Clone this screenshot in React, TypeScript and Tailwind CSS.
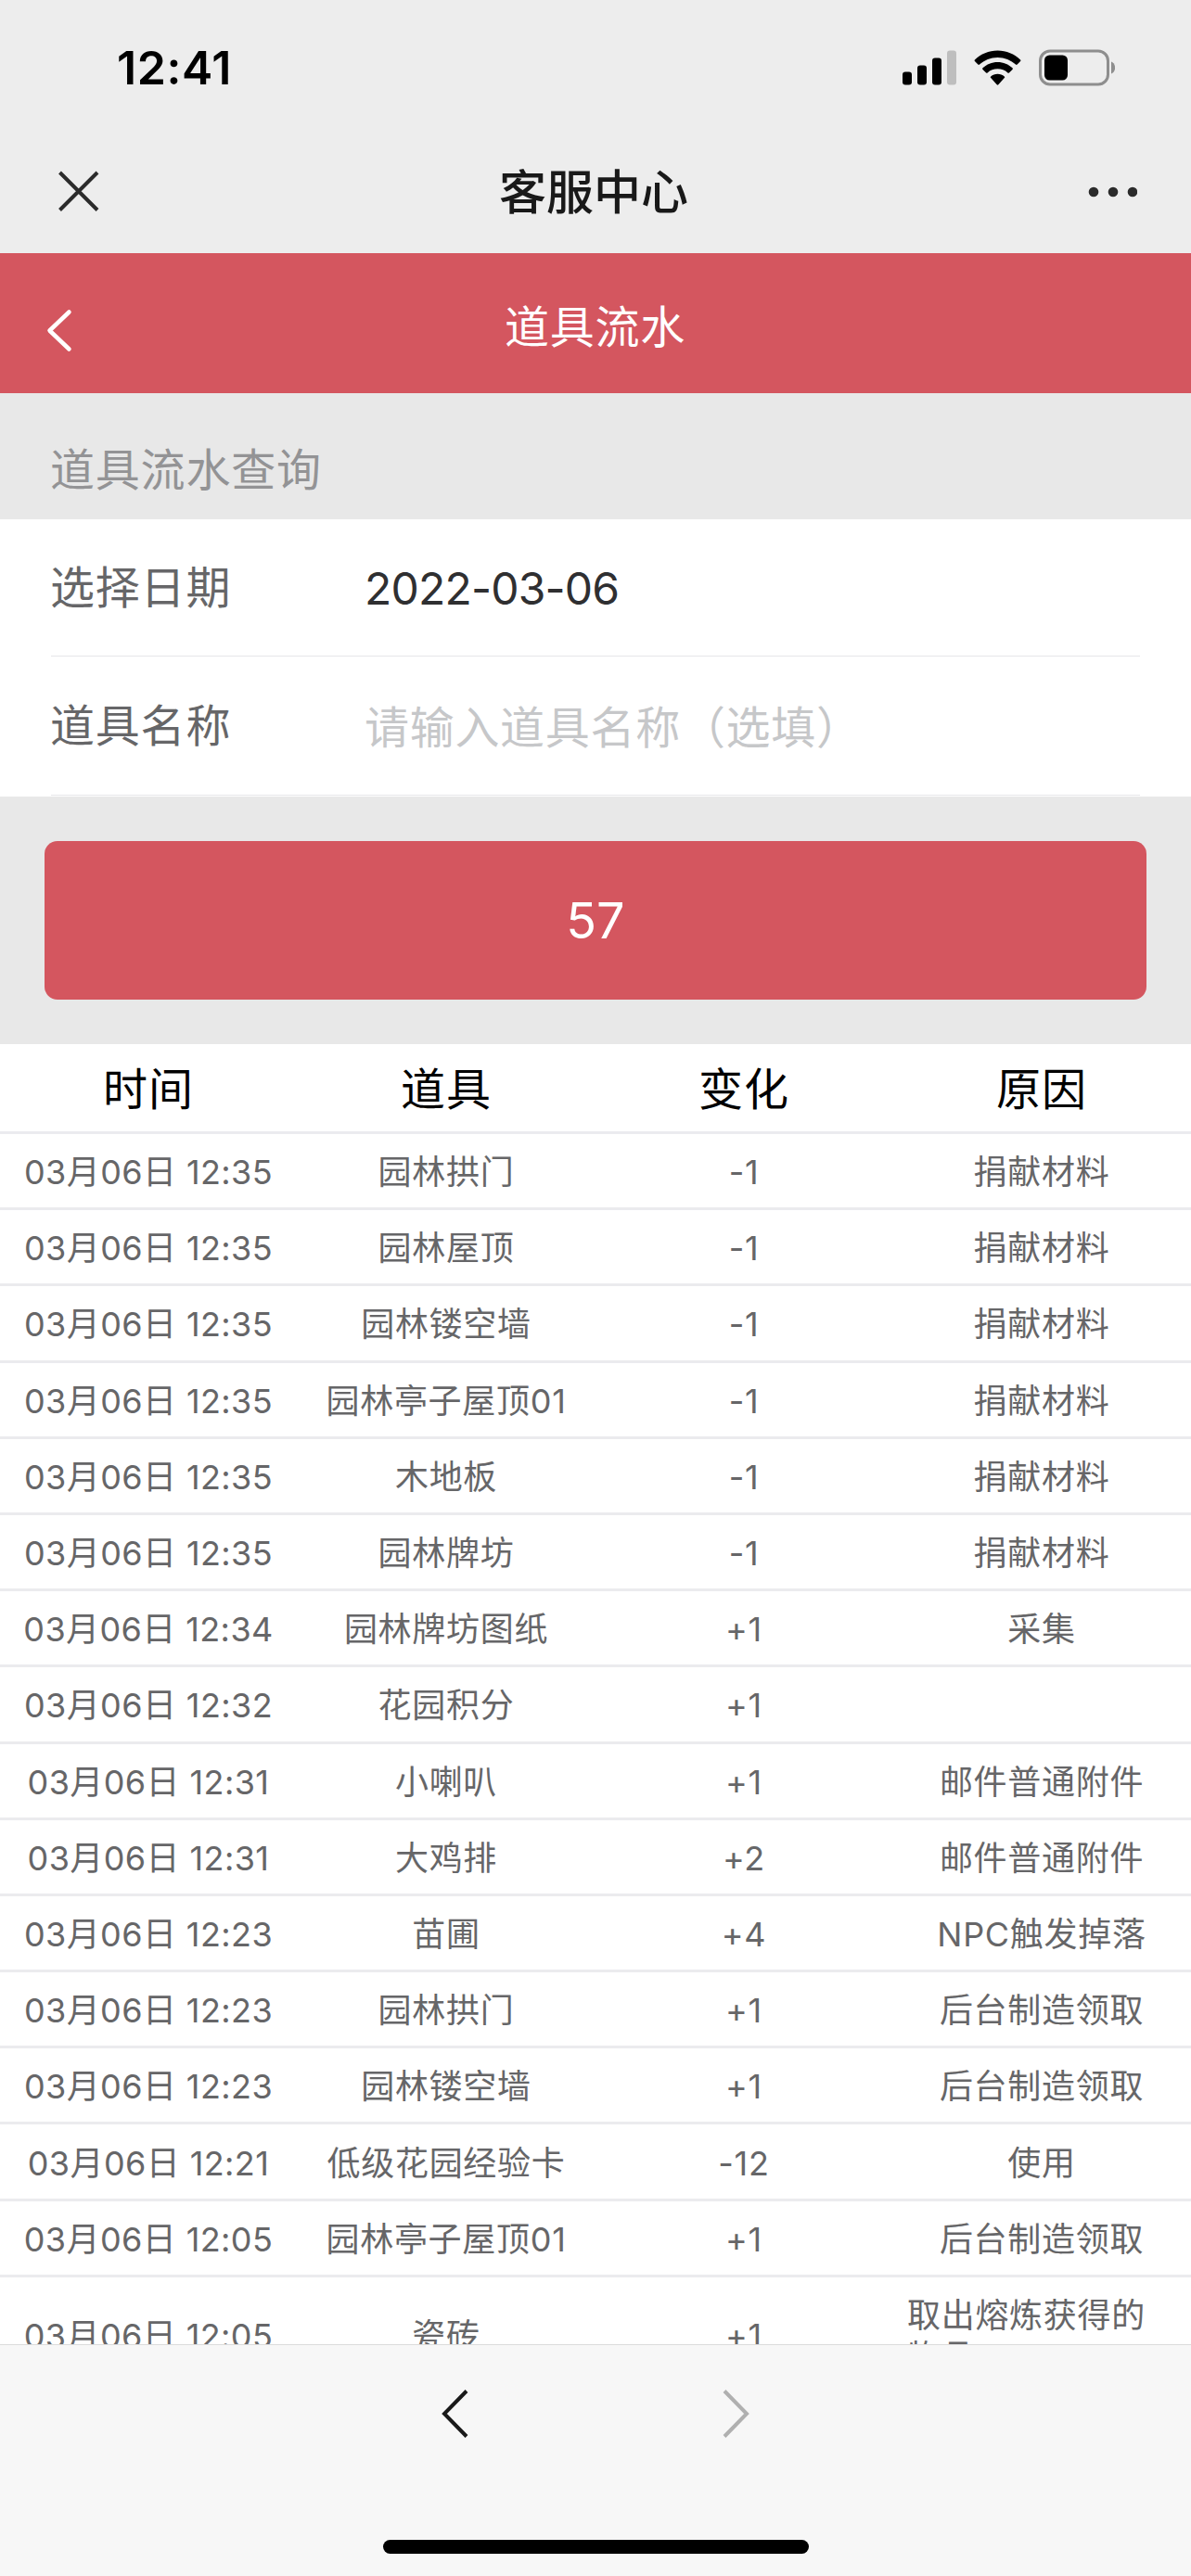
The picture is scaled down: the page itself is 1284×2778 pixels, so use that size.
import type { ReactNode } from 'react'

interface FlowRecord {
  time: string
  item: string
  change: string
  reason: string
}

const COLUMNS = ['时间', '道具', '变化', '原因']

const RECORDS: FlowRecord[] = [
  { time: '03月06日 12:35', item: '园林拱门', change: '-1', reason: '捐献材料' },
  { time: '03月06日 12:35', item: '园林屋顶', change: '-1', reason: '捐献材料' },
  { time: '03月06日 12:35', item: '园林镂空墙', change: '-1', reason: '捐献材料' },
  { time: '03月06日 12:35', item: '园林亭子屋顶01', change: '-1', reason: '捐献材料' },
  { time: '03月06日 12:35', item: '木地板', change: '-1', reason: '捐献材料' },
  { time: '03月06日 12:35', item: '园林牌坊', change: '-1', reason: '捐献材料' },
  { time: '03月06日 12:34', item: '园林牌坊图纸', change: '+1', reason: '采集' },
  { time: '03月06日 12:32', item: '花园积分', change: '+1', reason: '' },
  { time: '03月06日 12:31', item: '小喇叭', change: '+1', reason: '邮件普通附件' },
  { time: '03月06日 12:31', item: '大鸡排', change: '+2', reason: '邮件普通附件' },
  { time: '03月06日 12:23', item: '苗圃', change: '+4', reason: 'NPC触发掉落' },
  { time: '03月06日 12:23', item: '园林拱门', change: '+1', reason: '后台制造领取' },
  { time: '03月06日 12:23', item: '园林镂空墙', change: '+1', reason: '后台制造领取' },
  { time: '03月06日 12:21', item: '低级花园经验卡', change: '-12', reason: '使用' },
  { time: '03月06日 12:05', item: '园林亭子屋顶01', change: '+1', reason: '后台制造领取' },
  { time: '03月06日 12:05', item: '瓷砖', change: '+1', reason: '取出熔炼获得的物品' },
]

// ── Status bar ────────────────────────────────────────────────────────────────

function StatusBar() {
  return (
    <div className="flex h-[146px] items-center justify-between pl-[126px] pr-[82px]">
      <span className="text-[50px] leading-none font-semibold tracking-[0.6px] text-black">12:41</span>
      <div className="flex items-center">
        <svg className="h-[38px] w-[58px]" viewBox="0 0 58 38">
          <rect x="0" y="23.5" width="10" height="14" rx="3" />
          <rect x="16" y="16.5" width="10" height="21" rx="3" />
          <rect x="32" y="8.5" width="10" height="29" rx="3" />
          <rect x="48" y="0.5" width="10" height="37" rx="3" fill="#bebebe" />
        </svg>
        <svg className="ml-[19px] h-[38px] w-[51px]" viewBox="0 0 51 38">
          <path d="M25.5 0.5C16 0.5 7.300 4.300 0.900 10.500a1.100 1.100 0 0 0 0 1.600l3.500 3.500a1.100 1.100 0 0 0 1.600 0C11.100 10.800 18 7.900 25.500 7.900s14.400 2.900 19.500 7.700a1.100 1.100 0 0 0 1.600 0l3.500-3.500a1.100 1.100 0 0 0 0-1.600C43.700 4.300 35 0.500 25.500 0.500z" />
          <path d="M25.500 13c-6.200 0-11.800 2.400-16 6.300a1.100 1.100 0 0 0 0 1.600l3.600 3.500a1.100 1.100 0 0 0 1.500 0c2.900-2.600 6.700-4.100 10.900-4.100s8 1.500 10.900 4.100a1.100 1.100 0 0 0 1.500 0l3.600-3.500a1.100 1.100 0 0 0 0-1.600c-4.200-3.900-9.800-6.300-16-6.300z" />
          <path d="M25.500 25.800c-2.800 0-5.400 1-7.300 2.700a1.100 1.100 0 0 0 0 1.600l6.500 7.200a1.100 1.100 0 0 0 1.600 0l6.500-7.200a1.100 1.100 0 0 0 0-1.600c-1.900-1.700-4.500-2.700-7.300-2.700z" />
        </svg>
        <svg className="ml-[19px] h-[40px] w-[82px]" viewBox="0 0 82 40">
          <rect x="1.500" y="2" width="73" height="36" rx="10.500" fill="none" stroke="#8e8e8e" strokeWidth="3" />
          <rect x="6" y="6.500" width="25" height="27" rx="5.500" />
          <path d="M78 13.500v13c2.500-1 4.200-3.500 4.200-6.500s-1.700-5.500-4.200-6.500z" fill="#8e8e8e" />
        </svg>
      </div>
    </div>
  )
}

// ── Title bars ────────────────────────────────────────────────────────────────

function AppBar() {
  return (
    <div className="flex h-[127px] items-center justify-between px-[58px] pb-[7px]">
      <svg className="h-[54px] w-[54px]" viewBox="0 0 54 54" fill="none" stroke="#2b2b2b" strokeWidth="4">
        <path d="M6.500 7 47 47.500M47 7 6.500 47.500" />
      </svg>
      <h1 className="pt-[2px] pr-[4px] text-[51px] leading-none font-medium text-[#191919]">客服中心</h1>
      <svg className="h-[54px] w-[54px]" viewBox="0 0 54 54" fill="#2b2b2b">
        <circle cx="7" cy="28" r="5.300" />
        <circle cx="28" cy="28" r="5.300" />
        <circle cx="49" cy="28" r="5.300" />
      </svg>
    </div>
  )
}

function PageHeader() {
  return (
    <div className="grid h-[151px] grid-cols-[130px_1fr_130px] items-center bg-[#d4565f] text-white">
      <svg
        className="mt-4 ml-10 h-[50px] w-[50px]"
        viewBox="0 0 50 50"
        fill="none"
        stroke="currentColor"
        strokeWidth="4.500"
        strokeLinecap="round"
        strokeLinejoin="round"
      >
        <path d="M34.500 4.500 13.500 24.500 34.500 44.500" />
      </svg>
      <h2 className="pt-[8px] pr-px text-center text-[48px] leading-none tracking-[0.8px]">道具流水</h2>
    </div>
  )
}

// ── Query form ────────────────────────────────────────────────────────────────

function Field({ label, children }: { label: string; children: ReactNode }) {
  return (
    <div className="flex h-full items-center border-b border-[#e6e6e9]">
      <label className="-ml-px w-[339px] pt-px text-[#666668]">{label}</label>
      {children}
    </div>
  )
}

function QueryForm() {
  return (
    <div className="text-[48px] leading-none tracking-[0.8px]">
      <div className="flex h-[136px] items-center pt-[29px] pl-[54px] text-[#939395]">道具流水查询</div>
      <div className="grid grid-rows-[148px_150px] bg-white px-[55px] pb-[1px]">
        <Field label="选择日期">
          <span className="pt-[2px] tracking-[-0.8px] text-[#2f2f31]">2022-03-06</span>
        </Field>
        <Field label="道具名称">
          <input
            className="h-[70px] flex-1 pt-[4px] tracking-[0.7px] outline-none placeholder:text-[#c6c7c9]"
            placeholder="请输入道具名称（选填）"
          />
        </Field>
      </div>
      <div className="px-12 py-12">
        <button className="block h-[171px] w-full rounded-[14px] bg-[#d4565f] text-[54px] tracking-normal text-white">
          57
        </button>
      </div>
    </div>
  )
}

// ── Records ───────────────────────────────────────────────────────────────────

function Cell({ children }: { children: ReactNode }) {
  return (
    <div className="flex items-center justify-center pr-[16px] pl-[15px]">
      <span>{children}</span>
    </div>
  )
}

function RecordTable() {
  return (
    <div className="min-h-0 flex-1 overflow-hidden bg-white">
      <div className="grid h-[97px] grid-cols-4 border-b-[3px] border-[#ebebef] pt-[3px] text-[48px] leading-none tracking-[0.9px] text-black">
        {COLUMNS.map((name) => (
          <Cell key={name}>{name}</Cell>
        ))}
      </div>
      {RECORDS.map((r, i) => (
        <div
          key={i}
          className="grid min-h-[82.200px] grid-cols-4 border-b-[3px] border-[#ebebee] pt-[19px] pb-[15px] text-[36px] leading-[45px] tracking-[0.7px] text-[#666668]"
        >
          <Cell>
            <span className="tracking-[0.4px]">{r.time}</span>
          </Cell>
          <Cell>{r.item}</Cell>
          <Cell>{r.change}</Cell>
          <Cell>{r.reason}</Cell>
        </div>
      ))}
    </div>
  )
}

// ── Browser toolbar ───────────────────────────────────────────────────────────

function BottomBar() {
  return (
    <div className="flex h-[250px] shrink-0 flex-col items-center justify-between border-t border-[#dcdcdc] bg-[#f7f7f7] pt-[46px] pb-6">
      <div className="flex gap-[248px]">
        <svg className="h-14 w-14" viewBox="0 0 56 56" fill="none" stroke="#1a1a1a" strokeWidth="4">
          <path d="M41 3.500 17 28 41 52.500" />
        </svg>
        <svg className="h-14 w-14" viewBox="0 0 56 56" fill="none" stroke="#b0b0b0" strokeWidth="4">
          <path d="M15 3.500 39 28 15 52.500" />
        </svg>
      </div>
      <div className="h-[15px] w-[459px] rounded-full bg-black" />
    </div>
  )
}

export default function App() {
  return (
    <div className="flex h-[2778px] w-[1284px] flex-col overflow-hidden bg-[#e8e8e8] font-['Inter','Noto_Sans_CJK_SC',sans-serif]">
      <div className="bg-[#ededed]">
        <StatusBar />
        <AppBar />
      </div>
      <PageHeader />
      <QueryForm />
      <RecordTable />
      <BottomBar />
    </div>
  )
}
